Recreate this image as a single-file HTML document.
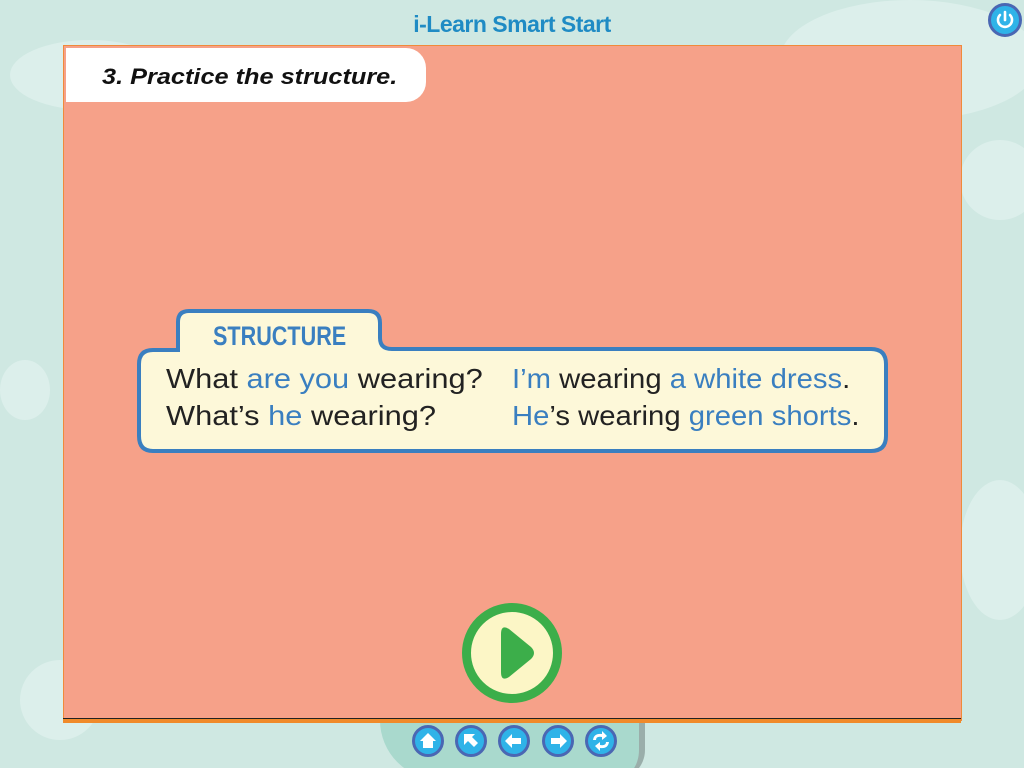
<!DOCTYPE html>
<html><head><style>
html,body{margin:0;width:1024px;height:768px;overflow:hidden}
body{background:#cfe8e2;position:relative;font-family:"Liberation Sans",sans-serif}
.cl{position:absolute;background:#dcefeb;border-radius:50%}
#panel{position:absolute;left:63px;top:45px;width:897px;height:675px;background:#f6a189;border:1px solid #f08a3a;border-bottom:none}
#bl{position:absolute;left:63px;top:718px;width:898px;height:1px;background:#222}
#ol{position:absolute;left:63px;top:719px;width:898px;height:4px;background:#f08a2a}
.t{position:absolute;font-size:28px;color:#222;white-space:nowrap;transform:scaleX(1.1);transform-origin:left}
.r{transform:scaleX(1.045)}
.b{color:#3a7fc0}
.nb{position:absolute;top:725px;width:32px;height:32px;border-radius:50%;background:#2fb3e8;border:3px solid #4a67b3;box-sizing:border-box}
</style></head><body>
<div class="cl" style="left:10px;top:40px;width:160px;height:70px"></div>
<div class="cl" style="left:0;top:360px;width:50px;height:60px"></div>
<div class="cl" style="left:20px;top:660px;width:80px;height:80px"></div>
<div class="cl" style="left:780px;top:0;width:260px;height:120px"></div>
<div class="cl" style="left:960px;top:140px;width:80px;height:80px"></div>
<div class="cl" style="left:960px;top:480px;width:80px;height:140px"></div>
<div style="position:absolute;left:380px;top:700px;width:259px;height:80px;background:#a9d9cd;border-radius:0 0 30px 60px;border-right:6px solid #9aaeaa"></div>
<div style="position:absolute;left:0;top:11px;width:1024px;text-align:center;font-size:23px;font-weight:bold;color:#1f8bc4;letter-spacing:-0.5px">i-Learn Smart Start</div>
<div style="position:absolute;left:988px;top:3px;width:34px;height:34px;border-radius:50%;background:#2fb3e8;border:3px solid #4a67b3;box-sizing:border-box"><svg width="28" height="28" viewBox="0 0 28 28"><path d="M9 9a7 7 0 1 0 10 0" fill="none" stroke="#fff" stroke-width="2.6" stroke-linecap="round"/><path d="M14 6v8" stroke="#fff" stroke-width="2.6" stroke-linecap="round"/></svg></div>
<div id="panel"></div><div id="bl"></div><div id="ol"></div>
<div style="position:absolute;left:66px;top:48px;width:360px;height:54px;background:#fff;border-radius:0 20px 20px 0"></div>
<div style="position:absolute;left:102px;top:64px;font-size:22px;font-weight:bold;font-style:italic;color:#111;transform:scaleX(1.15);transform-origin:left">3. Practice the structure.</div>
<svg style="position:absolute;left:136px;top:308px" width="754" height="148">
<path d="M42 42 V14 Q42 3 53 3 H232 Q244 3 244 15 V30 Q244 41 256 41 H735 Q750 41 750 56 V128 Q750 143 735 143 H17 Q3 143 3 128 V56 Q3 42 17 42 Z" fill="#fdf8d9" stroke="#3a7fc0" stroke-width="4"/>
</svg>
<div style="position:absolute;left:213px;top:321px;font-size:27px;font-weight:bold;color:#3a7fc0;transform:scaleX(0.8);transform-origin:left">STRUCTURE</div>
<div class="t" style="left:166px;top:363px">What <span class="b">are you</span> wearing?</div>
<div class="t" style="left:166px;top:400px">What’s <span class="b">he</span> wearing?</div>
<div class="t r" style="left:512px;top:363px"><span class="b">I’m</span> wearing <span class="b">a white dress</span>.</div>
<div class="t r" style="left:512px;top:400px"><span class="b">He</span>’s wearing <span class="b">green shorts</span>.</div>
<div style="position:absolute;left:462px;top:603px;width:100px;height:100px;border-radius:50%;background:#fcf6c6;border:9px solid #3cae4a;box-sizing:border-box"></div>
<svg style="position:absolute;left:496px;top:622px" width="42" height="62"><path d="M5 12 Q5 2 13 7 L35 25 Q41 31 35 37 L13 55 Q5 60 5 50 Z" fill="#3cae4a"/></svg>
<div class="nb" style="left:412px"><svg width="26" height="26"><path d="M13 5 L5 13 H8 V20 H18 V13 H21 Z" fill="#fff"/></svg></div>
<div class="nb" style="left:455px"><svg width="26" height="26"><path d="M6 6 H17 L14 9 L20 15 L16 19 L10 13 L6 17 Z" fill="#fff"/></svg></div>
<div class="nb" style="left:498px"><svg width="26" height="26"><path d="M4 13 L11 6 V10 H20 V16 H11 V20 Z" fill="#fff"/></svg></div>
<div class="nb" style="left:542px"><svg width="26" height="26"><path d="M22 13 L15 6 V10 H6 V16 H15 V20 Z" fill="#fff"/></svg></div>
<div class="nb" style="left:585px"><svg width="26" height="26"><path d="M5 12 Q6 5 14 6 L14 3 L19 8 L14 12 L14 9 Q8 8 8 12 Z M21 14 Q20 21 12 20 L12 23 L7 18 L12 14 L12 17 Q18 18 18 14 Z" fill="#fff"/></svg></div>
</body></html>
